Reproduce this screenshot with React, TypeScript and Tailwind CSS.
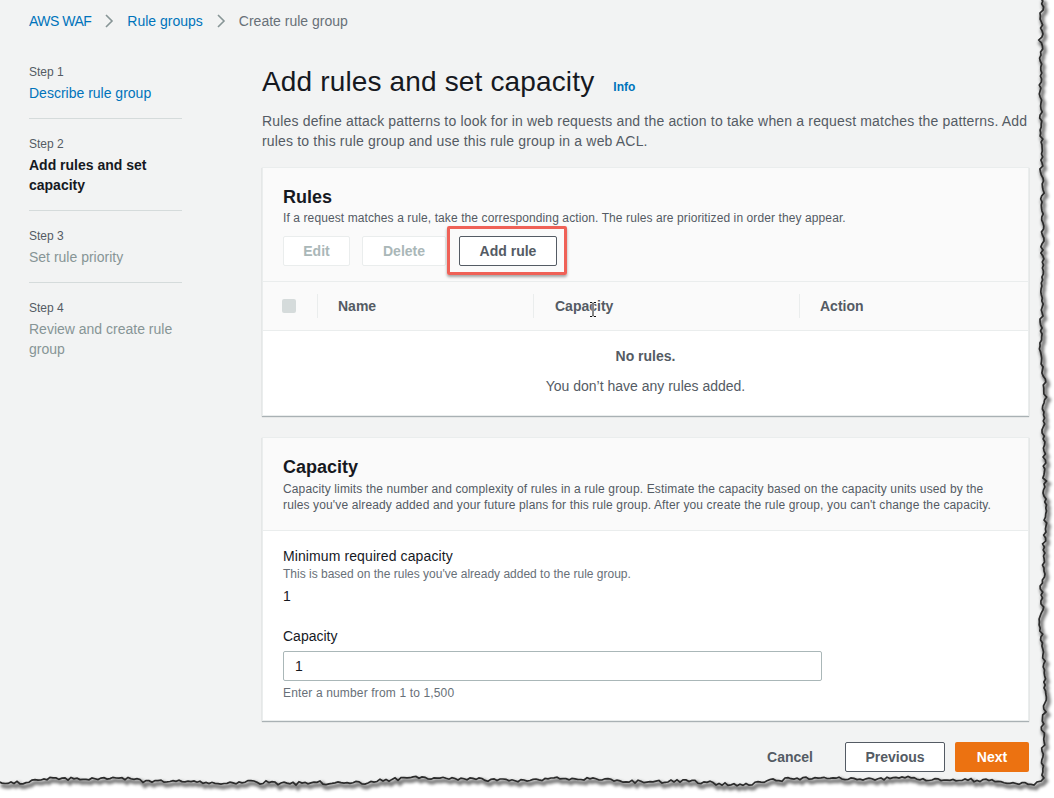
import React from "react";

function rng(seed: number) {
  let s = seed;
  return () => {
    s = (s * 1103515245 + 12345) % 2147483648;
    return s / 2147483648;
  };
}

function buildEdge(): [number, number][] {
  const r = rng(7);
  const pts: [number, number][] = [];
  let w = 0;
  for (let y = -2; y <= 782; y += 3) {
    w += (r() - 0.5) * 1.8;
    w = Math.max(-4.5, Math.min(4.5, w));
    const j = (r() - 0.5) * 3.2;
    pts.push([1041 + w + j, y]);
  }
  w = 0;
  for (let x = 1037; x >= -3; x -= 3) {
    w += (r() - 0.5) * 1.8;
    w = Math.max(-5, Math.min(5, w));
    const j = (r() - 0.5) * 3.2;
    pts.push([x, 783 + w + j]);
  }
  return pts;
}

function TornEdge() {
  const pts = buildEdge();
  const line = pts.map((p, i) => `${i === 0 ? "M" : "L"}${p[0].toFixed(1)} ${p[1].toFixed(1)}`).join(" ");
  const outside = `M1054 -2 ${pts.map((p) => `L${p[0].toFixed(1)} ${p[1].toFixed(1)}`).join(" ")} L-3 800 L1054 800 Z`;
  return (
    <svg className="absolute left-0 top-0 pointer-events-none" width={1054} height={798} viewBox="0 0 1054 798">
      <defs>
        <filter id="blur" x="-5%" y="-5%" width="110%" height="110%">
          <feGaussianBlur stdDeviation="1.7" />
        </filter>
      </defs>
      <path d={outside} fill="#ffffff" />
      <path d={line} fill="none" stroke="#000" strokeOpacity={0.5} strokeWidth={4.5} transform="translate(2,3)" filter="url(#blur)" />
      <path d={line} fill="none" stroke="#2b2b2b" strokeWidth={1.7} />
    </svg>
  );
}

function Chevron() {
  return (
    <svg width="12" height="16" viewBox="0 0 12 16" className="mx-[12px]">
      <polyline points="3,2 9,8 3,14" fill="none" stroke="#879596" strokeWidth="1.6" />
    </svg>
  );
}

function NavStep({ step, label, state, first, last }: { step: string; label: React.ReactNode; state: "link" | "active" | "disabled"; first?: boolean; last?: boolean }) {
  const labelCls =
    state === "link"
      ? "text-[#0073bb]"
      : state === "active"
      ? "text-[#16191f] font-bold"
      : "text-[#879596]";
  return (
    <div className={`${first ? "" : "pt-[17px]"} ${last ? "" : "pb-[15px] border-b border-[#d5dbdb]"}`}>
      <div className="text-[12px] leading-4 text-[#545b64]">{step}</div>
      <div className={`mt-[3px] text-[14px] leading-5 ${labelCls}`}>{label}</div>
    </div>
  );
}

function IBeam() {
  return (
    <svg className="absolute left-[588px] top-[301px]" width="10" height="17" viewBox="0 0 10 17">
      <path d="M2 1.5h2l1 1 1-1h2M5 2.5v12M2 15.5h2l1-1 1 1h2" fill="none" stroke="#fff" strokeWidth="2.4" />
      <path d="M2 1.5h2l1 1 1-1h2M5 2.5v12M2 15.5h2l1-1 1 1h2" fill="none" stroke="#111" strokeWidth="1" />
    </svg>
  );
}

export default function App() {
  return (
    <div className="relative w-[1054px] h-[798px] overflow-hidden bg-[#f2f3f3] font-['Liberation_Sans',Arial,sans-serif] text-[#16191f]">
      {/* breadcrumb */}
      <div className="flex items-center pl-[29px] pt-[11px] text-[14px] leading-5">
        <span className="text-[#0073bb] tracking-[-0.5px]">AWS WAF</span>
        <Chevron />
        <span className="text-[#0073bb]">Rule groups</span>
        <Chevron />
        <span className="text-[#687078]">Create rule group</span>
      </div>

      <div className="flex pl-[29px] pt-[33px]">
        {/* side nav */}
        <nav className="w-[153px] shrink-0">
          <NavStep first step="Step 1" label="Describe rule group" state="link" />
          <NavStep step="Step 2" label={<>Add rules and set<br />capacity</>} state="active" />
          <NavStep step="Step 3" label="Set rule priority" state="disabled" />
          <NavStep last step="Step 4" label={<>Review and create rule<br />group</>} state="disabled" />
        </nav>

        {/* main */}
        <main className="ml-[80px] w-[767px] shrink-0">
          <div className="flex items-baseline">
            <h1 className="text-[28px] leading-9 font-normal text-[#16191f] tracking-[0.15px]">Add rules and set capacity</h1>
            <span className="ml-[19px] text-[12px] font-bold text-[#0073bb]">Info</span>
          </div>
          <p className="mt-[11px] text-[14px] leading-5 text-[#545b64] whitespace-nowrap tracking-[0.17px]">
            Rules define attack patterns to look for in web requests and the action to take when a request matches the patterns. Add
            <br />
            rules to this rule group and use this rule group in a web ACL.
          </p>

          {/* Rules panel */}
          <section className="mt-[16px] border border-[#eaeded] bg-white shadow-[0_1px_1px_0_rgba(0,28,36,0.3)]">
            <div className="bg-[#fafafa] px-[20px] pt-[18px] pb-[15px] border-b border-[#eaeded]">
              <h2 className="text-[18px] leading-[22px] font-bold text-[#16191f]">Rules</h2>
              <p className="mt-[2px] text-[12px] leading-4 text-[#545b64] tracking-[0.1px]">
                If a request matches a rule, take the corresponding action. The rules are prioritized in order they appear.
              </p>
              <div className="mt-[10px] flex items-center">
                <button className="h-[30px] w-[67px] border border-[#eaeded] rounded-[2px] bg-white text-[14px] font-bold text-[#aab7b8]">Edit</button>
                <button className="ml-[12px] h-[30px] w-[84px] border border-[#eaeded] rounded-[2px] bg-white text-[14px] font-bold text-[#aab7b8]">Delete</button>
                <div className="relative ml-[13px]">
                  <button className="h-[30px] w-[98px] border border-[#545b64] rounded-[2px] bg-white text-[14px] font-bold text-[#545b64]">Add rule</button>
                  <div className="absolute left-[-12px] right-[-10px] top-[-10px] bottom-[-9px] border-[3px] border-[#ef6157] rounded-[2px] shadow-[0_2px_3px_rgba(0,0,0,0.35)]" />
                </div>
              </div>
            </div>
            <div className="flex items-center h-[49px] bg-[#fafafa] border-b border-[#eaeded] text-[14px] font-bold text-[#545b64]">
              <div className="w-[54px] shrink-0 pl-[19px] flex items-center">
                <span className="block w-[14px] h-[14px] rounded-[2px] bg-[#d5dbdb]" />
              </div>
              <div className="w-[216px] shrink-0 border-l border-[#eaeded] h-[24px] flex items-center pl-[20px]">Name</div>
              <div className="w-[266px] shrink-0 border-l border-[#eaeded] h-[24px] flex items-center pl-[21px]">Capacity</div>
              <div className="flex-1 border-l border-[#eaeded] h-[24px] flex items-center pl-[20px]">Action</div>
            </div>
            <div className="pt-[15px] pb-[19px] text-center text-[14px] leading-5">
              <div className="font-bold text-[#545b64]">No rules.</div>
              <div className="mt-[10px] text-[#545b64]">You don’t have any rules added.</div>
            </div>
          </section>

          {/* Capacity panel */}
          <section className="mt-[21px] border border-[#eaeded] bg-white shadow-[0_1px_1px_0_rgba(0,28,36,0.3)]">
            <div className="bg-[#fafafa] px-[20px] pt-[18px] pb-[17px] border-b border-[#eaeded]">
              <h2 className="text-[18px] leading-[22px] font-bold text-[#16191f]">Capacity</h2>
              <p className="mt-[3px] text-[12px] leading-4 text-[#545b64] whitespace-nowrap">
                <span className="tracking-[0.14px]">Capacity limits the number and complexity of rules in a rule group. Estimate the capacity based on the capacity units used by the</span>
                <br />
                <span className="tracking-[0.13px]">rules you've already added and your future plans for this rule group. After you create the rule group, you can't change the capacity.</span>
              </p>
            </div>
            <div className="px-[20px] pt-[15px] pb-[19px]">
              <div className="text-[14px] leading-5 text-[#16191f] tracking-[0.1px]">Minimum required capacity</div>
              <div className="text-[12px] leading-4 text-[#687078]">This is based on the rules you've already added to the rule group.</div>
              <div className="mt-[4px] text-[14px] leading-5 text-[#16191f]">1</div>
              <div className="mt-[20px] text-[14px] leading-5 text-[#16191f]">Capacity</div>
              <div className="mt-[5px] w-[539px] h-[30px] border border-[#aab7b8] rounded-[2px] bg-white flex items-center pl-[11px] text-[14px] text-[#16191f]">1</div>
              <div className="mt-[4px] text-[12px] leading-4 text-[#687078] tracking-[0.15px]">Enter a number from 1 to 1,500</div>
            </div>
          </section>

          {/* footer */}
          <div className="mt-[21px] flex items-center justify-end">
            <button className="text-[14px] font-bold text-[#545b64] mr-[32px]">Cancel</button>
            <button className="h-[30px] w-[100px] border border-[#545b64] rounded-[2px] bg-white text-[14px] font-bold text-[#545b64]">Previous</button>
            <button className="ml-[10px] h-[30px] w-[74px] rounded-[2px] bg-[#ec7211] text-[14px] font-bold text-white">Next</button>
          </div>
        </main>
      </div>

      <IBeam />
      <TornEdge />
    </div>
  );
}
